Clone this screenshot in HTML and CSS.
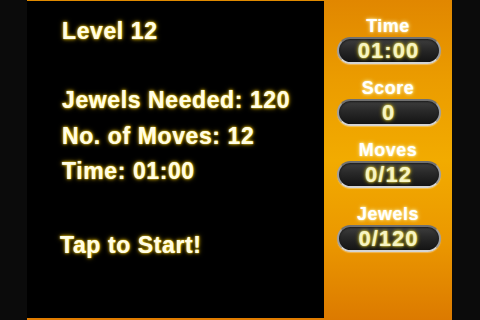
FILE: index.html
```
<!DOCTYPE html>
<html>
<head>
<meta charset="utf-8">
<link rel="stylesheet" href="styles.css">
</head>
<body>
<div class="screen">
  <div class="edge"></div>
  <main class="main">
    <div class="line level">Level 12</div>
    <div class="info">
      <div class="line">Jewels Needed: 120</div>
      <div class="line">No. of Moves: 12</div>
      <div class="line">Time: 01:00</div>
    </div>
    <div class="line start">Tap to Start!</div>
  </main>
  <aside class="panel">
    <div class="stat">
      <div class="label">Time</div>
      <div class="pill">01:00</div>
    </div>
    <div class="stat">
      <div class="label">Score</div>
      <div class="pill">0</div>
    </div>
    <div class="stat">
      <div class="label">Moves</div>
      <div class="pill">0/12</div>
    </div>
    <div class="stat jewels">
      <div class="label">Jewels</div>
      <div class="pill">0/120</div>
    </div>
  </aside>
  <div class="edge"></div>
</div>
</body>
</html>
```

FILE: styles.css
```
html, body {
  margin: 0;
  padding: 0;
  background: #0b0b0b;
}
body {
  width: 480px;
  height: 320px;
  overflow: hidden;
  font-family: "Liberation Sans", Arial, sans-serif;
  font-weight: bold;
}
.screen {
  display: flex;
  width: 480px;
  height: 320px;
}
.edge {
  width: 27px;
  flex: none;
  background: #0b0b0b;
}
.edge:last-child {
  width: 28px;
}
.main {
  width: 297px;
  flex: none;
  box-sizing: border-box;
  background: #000;
  border-top: 1px solid #e08a00;
  border-bottom: 2px solid #e07c00;
  padding: 12px 0 0 35px;
}
.line {
  height: 36px;
  line-height: 36px;
  font-size: 23px;
  letter-spacing: 0.6px;
  color: #fffde6;
  text-shadow: 0 0 1px #ffe34a, 0 0 3px #e0b800, 0 0 5px #a08000;
  white-space: nowrap;
}
.info {
  margin-top: 34px;
}
.info .line {
  height: 35.5px;
  line-height: 35.5px;
}
.start {
  margin-top: 37px;
  margin-left: -2px;
}
.panel {
  width: 128px;
  flex: none;
  box-sizing: border-box;
  padding-top: 17px;
  background: linear-gradient(to bottom, #e18700 0%, #eb9c00 25%, #f2ab00 50%, #eb9800 75%, #dc7a00 100%);
  display: flex;
  flex-direction: column;
  align-items: center;
}
.stat {
  display: flex;
  flex-direction: column;
  align-items: center;
  height: 62px;
}
.jewels {
  margin-top: 2px;
}
.label {
  height: 18px;
  line-height: 18px;
  font-size: 18px;
  letter-spacing: 0.5px;
  color: #fff;
  text-shadow: 0 0 2px #fff6c0, 0 0 4px #fff0a0;
  margin-bottom: 2px;
}
.pill {
  width: 104px;
  height: 27px;
  box-sizing: border-box;
  margin-left: 1px;
  border-radius: 14px;
  border: 2px solid #a0a0a0;
  border-top-color: #707070;
  border-bottom-color: #d4d4d4;
  background: linear-gradient(to bottom, #3e3e3e 0%, #282828 45%, #141414 100%);
  box-shadow: inset 0 1px 2px rgba(0,0,0,0.6), 0 1px 1px rgba(255,255,255,0.35);
  text-align: center;
  line-height: 23px;
  font-size: 22px;
  letter-spacing: 1px;
  color: #f6f4c4;
  text-shadow: 0 0 2px #fff070, 0 0 4px #d8c000;
}
```
